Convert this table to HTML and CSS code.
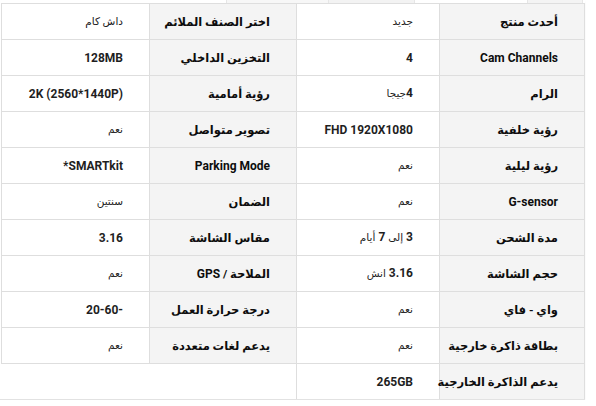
FILE: index.html
```html
<!DOCTYPE html>
<html lang="ar">
<head>
<meta charset="utf-8">
<title>مواصفات</title>
<link rel="stylesheet" href="styles.css">
</head>
<body>
<div class="panel">
  <div class="strip">
    <span class="seg s1"></span><span class="seg s2"></span><span class="seg s3"></span><span class="seg s4"></span><span class="seg s5"></span>
  </div>
  <table class="specs" dir="rtl">
    <colgroup><col class="c1"><col class="c2"><col class="c3"><col class="c4"></colgroup>
    <tbody>
      <tr><th>أحدث منتج</th><td class="ar">جديد</td><th>اختر الصنف الملائم</th><td class="ar">داش كام</td></tr>
      <tr><th class="lat">Cam Channels</th><td>4</td><th>التخزين الداخلي</th><td>128MB</td></tr>
      <tr><th>الرام</th><td>4<span class="n">جيجا</span></td><th>رؤية أمامية</th><td>2K (2560*1440P)</td></tr>
      <tr><th>رؤية خلفية</th><td>FHD 1920X1080</td><th>تصوير متواصل</th><td class="ar">نعم</td></tr>
      <tr><th>رؤية ليلية</th><td class="ar">نعم</td><th class="lat">Parking Mode</th><td>SMARTkit*</td></tr>
      <tr><th class="lat">G-sensor</th><td class="ar">نعم</td><th>الضمان</th><td class="ar">سنتين</td></tr>
      <tr><th>مدة الشحن</th><td>3 <span class="n">إلى</span> 7 <span class="n">أيام</span></td><th>مقاس الشاشة</th><td>3.16</td></tr>
      <tr><th>حجم الشاشة</th><td>3.16 <span class="n">انش</span></td><th>الملاحة / <span class="l">GPS</span></th><td class="ar">نعم</td></tr>
      <tr><th>واي - فاي</th><td class="ar">نعم</td><th>درجة حرارة العمل</th><td dir="ltr" class="lt">20-60-</td></tr>
      <tr><th>بطاقة ذاكرة خارجية</th><td class="ar">نعم</td><th>يدعم لغات متعددة</th><td class="ar">نعم</td></tr>
      <tr class="last"><th>يدعم الذاكرة الخارجية</th><td>265GB</td></tr>
    </tbody>
  </table>
</div>
</body>
</html>
```

FILE: styles.css
```css
html, body {
  margin: 0;
  padding: 0;
  background: #ffffff;
}

body {
  font-family: Roboto, "DejaVu Sans", sans-serif;
  color: #1f1f1f;
}

.panel {
  width: 585px;
  border-bottom: 1px solid #e2e2e2;
  box-shadow: 0 1px 2px rgba(0, 0, 0, 0.05);
}

.strip {
  display: flex;
  height: 3px;
  width: 596px;
}

.seg {
  display: block;
  height: 3px;
  border-right: 1px solid #e6e6e6;
  box-sizing: border-box;
}

.s1 { width: 227px; background: #ffffff; }
.s2 { width: 102px; background: #f7f7f7; }
.s3 { width: 86px; background: #f3f3f3; }
.s4 { width: 113px; background: #ffffff; }
.s5 { width: 55px; background: #f4f4f4; }

.specs {
  border-collapse: collapse;
  table-layout: fixed;
  margin-left: 1px;
  width: 583px;
}

.c1 { width: 145px; }
.c2 { width: 143px; }
.c3 { width: 147px; }
.c4 { width: 148px; }

.specs th,
.specs td {
  height: 35px;
  padding: 0 26px;
  border: 1px solid #dedede;
  text-align: right;
  vertical-align: middle;
  font-size: 12px;
  line-height: 14px;
  font-weight: 700;
  white-space: nowrap;
}

.specs th {
  background: #f4f4f4;
  color: #0d0d0d;
  font-size: 11.5px;
}

.specs th.lat,
.specs th .l {
  font-size: 12px;
}

.specs td {
  background: #ffffff;
  color: #1f1f1f;
}

.specs td.ar {
  font-weight: 400;
  font-size: 10.5px;
  color: #222222;
}

.specs td.lt {
  text-align: right;
}

.specs .n {
  font-weight: 400;
  font-size: 10.5px;
}

.specs tr.last th,
.specs tr.last td {
  border-bottom: none;
}
```
